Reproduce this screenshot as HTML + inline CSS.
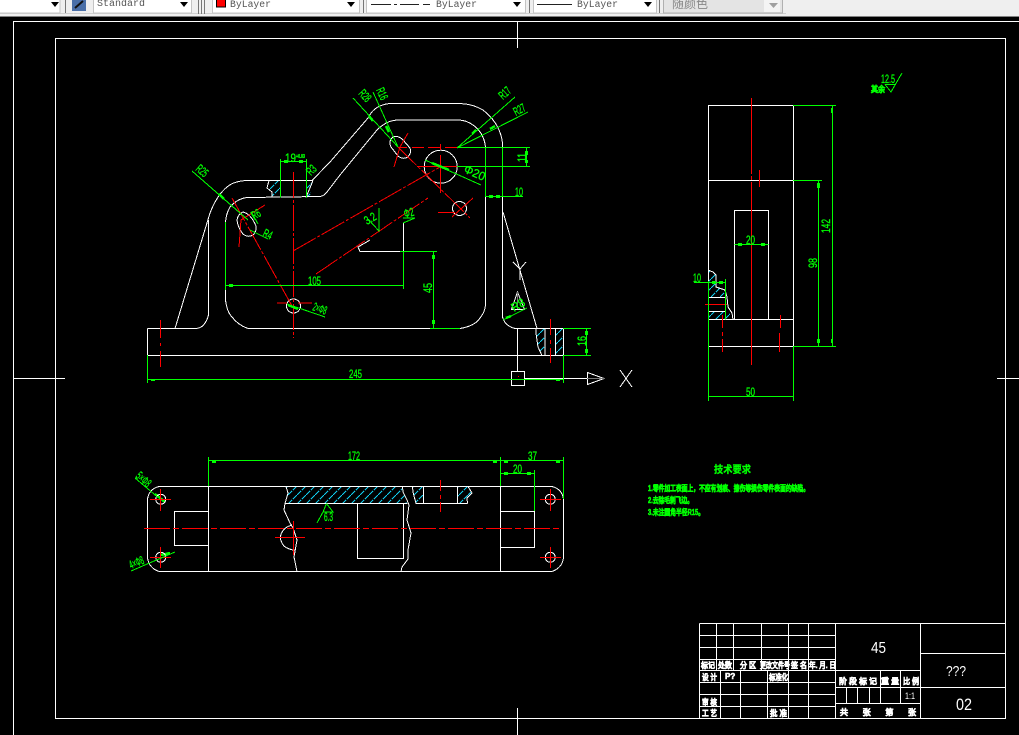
<!DOCTYPE html>
<html><head><meta charset="utf-8"><style>
html,body{margin:0;padding:0;background:#000;width:1019px;height:735px;overflow:hidden}
svg{display:block;position:absolute;left:0;top:0}
.w{stroke:#fff;fill:none}.g{stroke:#0f0;fill:none}.r{stroke:#f00;fill:none}.c{stroke:#1ce;fill:none}
.gt{fill:#0f0;stroke:#0f0;stroke-width:.35;font:12px "Liberation Sans",sans-serif}
.gc{fill:#0f0;stroke:#0f0;stroke-width:.6;font:bold 8px "Liberation Sans","WenQuanYi Zen Hei",sans-serif}
.wt{fill:#fff;stroke:#fff;stroke-width:.6;font:bold 8px "Liberation Sans","WenQuanYi Zen Hei",sans-serif}
.tb{fill:#555;font:10px "Liberation Mono",monospace}
.d{stroke-dasharray:26 2 3 2}
</style></head><body>
<svg width="1019" height="735" viewBox="0 0 1019 735" xmlns="http://www.w3.org/2000/svg">
<defs>
<pattern id="h" width="9" height="9" patternUnits="userSpaceOnUse"><path d="M0 9L9 0" stroke="#1ce" stroke-width="1" stroke-dasharray="6 1" shape-rendering="crispEdges"/></pattern>
</defs>
<rect width="1019" height="735" fill="#000"/>
<!-- toolbar -->
<rect width="1019" height="16" fill="#efefef"/>
<rect y="16" width="1019" height="1" fill="#808080"/>
<rect y="13" width="786" height="1" fill="#d0d0d0"/>
<g fill="#fff" stroke="#c4c4c4"><rect x="-1" y="-1" width="61" height="14"/><rect x="93.500" y="-1" width="98" height="14"/><rect x="212.500" y="-1" width="147" height="14"/><rect x="366.500" y="-1" width="159" height="14"/><rect x="533.500" y="-1" width="123" height="14"/></g>
<rect x="663.500" y="-1" width="119" height="14" fill="#e4e4e4" stroke="#b0b0b0"/>
<rect x="764" y="0" width="16" height="12" fill="#f4f4f4"/>
<g fill="#000"><path d="M51 2h8l-4 5z"/><path d="M180 2h8l-4 5z"/><path d="M347 2h8l-4 5z"/><path d="M513 2h8l-4 5z"/><path d="M644 2h8l-4 5z"/></g>
<path d="M769 3h9l-4.500 5z" fill="#a0a0a0"/>
<g stroke="#777" shape-rendering="crispEdges"><path d="M65.500 0V13M198.500 0V14M201.500 0V14M204.500 0V14M363.500 0V13M529.500 0V13M659.500 0V13"/></g>
<rect x="72" y="0" width="14" height="11" fill="#4a6fa8"/><path d="M75 8L83 1" stroke="#111" stroke-width="2"/>
<rect x="216.500" y="-1" width="9" height="8" fill="#f00" stroke="#000"/>
<text class="tb" x="97" y="6" textLength="48" lengthAdjust="spacingAndGlyphs">Standard</text>
<text class="tb" x="230" y="7" textLength="41" lengthAdjust="spacingAndGlyphs">ByLayer</text>
<text class="tb" x="436" y="7" textLength="41" lengthAdjust="spacingAndGlyphs">ByLayer</text>
<text class="tb" x="577" y="7" textLength="41" lengthAdjust="spacingAndGlyphs">ByLayer</text>
<text x="672" y="8" textLength="36" lengthAdjust="spacingAndGlyphs" style="fill:#888;font:12px 'WenQuanYi Zen Hei','Noto Sans CJK SC',sans-serif">随颜色</text>
<g shape-rendering="crispEdges" stroke="#222"><path d="M371 4.500H391M394 4.500H397M400 4.500H419M423 4.500H430M537 4.500H572"/></g>

<g stroke-width="1" shape-rendering="crispEdges" fill="none">
<!-- frames -->
<path class="w" d="M13.500 735V21.500H1019"/>
<rect class="w" x="55.500" y="38.500" width="950" height="680"/>
<path class="w" d="M517.500 21V48M517.500 708V735M13 378.500H65M997 378.500H1019"/>

<!-- hatches front -->
<path d="M269 180.500L267 188L272 192L272 197.500H281V180.500Z" fill="url(#h)"/>
<path d="M306 180.500L313 180.500L310 197.500H306Z" fill="url(#h)"/>
<path d="M536 328.500L538 347L542 355.500H545V328.500Z" fill="url(#h)"/>
<path d="M555 328.500H563V355.500H555Z" fill="url(#h)"/>
<!-- hatches right view -->
<path d="M708 270L713 272L716 275L716 287L725 290L727 297.500H708Z" fill="url(#h)"/>
<path d="M708 311.500H729L732 319.500H708Z" fill="url(#h)"/>
<!-- hatches bottom -->
<path d="M286 486.500L288 493L285 503.500H407L403 492L402 486.500Z" fill="url(#h)"/>
<path d="M412.500 486.500L413 492L416 503.500H423.500V486.500Z" fill="url(#h)"/>
<path d="M457.500 486.500H468L472 493L467 498L467 503.500H457.500Z" fill="url(#h)"/>

<!-- front view -->
<path class="w" d="M147.500 328.500H196Q205 328 208.500 315V220M147.500 328.500V355.500H563.500V328.500H515Q505 326 502.500 317V143Q500 123 483 110Q473 104 460 103.500H395Q385 103 378 107Q372 110 368 118L330 162L312 180.500H247Q234 181 227 187Q217 195 210 213L175 328.500"/>
<path class="w" d="M248 328.500H460Q475 326 480 318Q485 312 485.500 305V147Q484 133 473 125Q466 120 458 120H398Q387 120 377 130L340 175L327 192Q324 196 320 196.500L248 197.500Q238 198 230 207Q226 214 225.500 222V300Q227 312 232 317Q238 325 248 328.500Z"/>
<path class="w" d="M503 212L537 328.500"/>
<path class="w" d="M370 240L358 247L360 251.500H403.500V223"/>
<path class="w" d="M269 180.500L267 188L272 192V197.500M313 180.500L306 197.500"/>
<path class="w" d="M536 328.500V333L538 347L542 355.500M545 328.500V355.500M555.500 328.500V355.500"/>
<path class="w" d="M243 212Q238 214 237 220Q238 228 243 234Q248 238 253 235Q257 231 256 226Q251 214 243 212Z"/>
<circle class="w" cx="293.500" cy="306" r="7"/>
<circle class="w" cx="440.700" cy="166.700" r="16.500"/>
<circle class="w" cx="459.500" cy="208.500" r="7"/>
<path class="w" d="M393 137Q388 141 391 147L398 156Q403 160 408 157Q412 152 410 148L403 140Q398 135 393 137Z"/>
<!-- UCS -->
<path class="w" d="M517.500 328V371.500M525 378.500H587M520 269L513 262M520 269L526 262M520 269V280"/>
<rect class="w" x="511.500" y="371.500" width="13" height="14"/>
<path class="w" d="M587.500 372.500V384.500L604 378.500ZM620 370L632 387M632 370L620 387M517.500 292L511.500 309.500H524.500Z"/>
<path stroke="#777" d="M587 378.500H605M517.500 292V309"/>
<path stroke="#f00" d="M518 376.500h1"/>

<!-- red front -->
<path class="r d" d="M293.500 172V338"/>
<path class="r d" d="M293 251L440 167"/>
<path class="r d" d="M316 274L428 198"/>
<path class="r d" d="M232 198L292 306"/>
<path class="r" d="M265 205L241 220L239 247M277 303H287M298 303H312M160.500 320V338M160.500 343V346M160.500 351V367M550.500 319V335M550.500 340V344M550.500 348V363"/>
<path class="r" d="M417 166.500H458M440.500 144V150M440.500 155V193M398 147.500H407M412 147.500H424M428 147.500H440M445 147.500H457"/>
<path class="r d" d="M398 147L470 218"/>
<path class="r" d="M408 133L400 147L394 167M438 212.500H455M473 198L452 217"/>

<!-- green front -->
<path class="g" d="M192 171L248 220M250 230L268 239M252 213L258 224"/>
<path class="g" d="M280.500 159V197.500M306.500 159V197.500M280.500 161.500H306.500M225.500 222V290M225.500 285.500H403.500M403.500 251.500V289"/>
<path class="g" d="M353 98L398 147M373 92L398 147M457 148L515 97M457 148L528 112M425 160L481 185"/>
<path class="g" d="M457 147.500H530M457 166.500H530M526.500 147.500V166.500M485.500 147V197M502.500 147V197M485.500 196.500H523"/>
<path class="g" d="M400 251.500H437M433.500 251.500V328.500M430 328.500H460M563 328.500H591M563 355.500H591M586.500 328.500V355.500"/>
<path class="g" d="M147.500 355V383M563.500 355V383M147.500 379.500H563.500"/>
<path class="g" d="M287 304L325 317M503 320L527 308M379 208V231L368 219M403 223L415 218H403"/>
<g fill="#0f0" stroke="none"><rect x="284" y="160" width="4" height="3"/><rect x="299" y="160" width="4" height="3"/><rect x="229" y="284" width="4" height="3"/><rect x="432" y="255" width="3" height="4"/><rect x="432" y="320" width="3" height="4"/><rect x="525" y="151" width="3" height="4"/><rect x="525" y="160" width="3" height="3"/><rect x="489" y="195" width="4" height="3"/><rect x="496" y="195" width="4" height="3"/><rect x="585" y="331" width="3" height="4"/><rect x="585" y="349" width="3" height="4"/><rect x="151" y="379" width="4" height="2"/><rect x="556" y="379" width="4" height="2"/></g>
<g stroke="#0f0" stroke-width="2.500"><path d="M219 194L224 199M369 116L373 121M386 126L389 132M472 134L476 130M490 129L495 126M432 163L449 170M288 305L298 309M506 318L511 316M165 502L155 494M161 555L170 553"/></g>

<!-- right view -->
<path class="w" d="M708.500 270V105.500H793.500V346.500H708.500V270M708.500 180.500H793.500M734.500 319.500V210.500H768.500V319.500M708.500 319.500H793.500"/>
<path class="w" d="M708 270L713 272L716 275V287L725 290L727 297L728 307L732 313L733 319.500M708.500 297.500H726M708.500 311.500H726"/>
<path class="r" d="M751.500 98V174M751.500 176V180M751.500 182V365M759.500 170V187M705 304.500H727M722.500 315V328M722.500 332V336M722.500 339V352M780.500 315V328M779.500 333V352"/>
<path class="g" d="M793 105.500H836M832.500 105.500V346.500M793 180.500H822M818.500 180.500V346.500M793 346.500H836M734.500 244.500H768.500M694 282.500H725.500M725.500 279V319.500M708.500 281V401M793.500 346.500V401M708.500 396.500H793.500"/>
<g fill="#0f0" stroke="none"><rect x="738" y="243" width="4" height="3"/><rect x="761" y="243" width="4" height="3"/><rect x="712" y="281" width="4" height="3"/><rect x="719" y="281" width="4" height="3"/><rect x="817" y="183" width="3" height="5"/><rect x="817" y="339" width="3" height="4"/><rect x="831" y="108" width="2" height="5"/><rect x="831" y="339" width="2" height="4"/></g>
<path class="g" d="M885 84.500H896M885 84.500L891 92L902 73"/>

<!-- bottom view -->
<path class="w" d="M159 486.500H552Q562 489 563.500 499V558Q562 568 552 571.500H159Q149 568 147.500 558V499Q149 489 159 486.500Z"/>
<path class="w" d="M208.500 486.500V571.500M500.500 486.500V571.500M208.500 511.500H174.500V545.500H208.500M500.500 511.500H534.500V547.500H500.500"/>
<path class="w" d="M286 486.500L288 493L285 503.500L284 510L290 523L293 528L297 540L294 557L297 571.500M402.500 486.500L403 492L407 500L409 505L407 520L411 533L408 550L408 559L402 567L401 571.500"/>
<path class="w" d="M285 503.500H407.500M357.500 503.500V558.500H403.500V503.500M412.500 486.500L413 492L416 503.500H467.500M423.500 486.500V503.500M457.500 486.500V503.500M468 486.500L472 493L467 498L467.500 503.500"/>
<path class="w" d="M292 525Q284 527 281 534Q279 540 284 546Q289 550 295 550"/>
<circle class="w" cx="160.700" cy="499.300" r="5"/><circle class="w" cx="160.700" cy="557.300" r="5"/><circle class="w" cx="550.300" cy="499.300" r="5"/><circle class="w" cx="550.300" cy="557.300" r="5"/>
<path class="r" stroke-dasharray="26 3 6 3" d="M144 528.500H562"/>
<path class="r" d="M150 499.500H171M160.500 489V511M150 557.500H171M160.500 547V568M540 499.500H561M550.500 489V511M540 557.500H561M550.500 547V568M293.500 521V555M275 537.500H305M440.500 480V491M440.500 495V499M440.500 502V512"/>
<path class="g" d="M208.500 457V486M500.500 457V486M563.500 457V499M208.500 460.500H563.500M500.500 473.500H534.500M534.500 470V511M135 478L160 499M131 571L175 552M326.500 503.500L323 512H333L326.500 503.500M323 512L317 523"/>
<g fill="#0f0" stroke="none"><rect x="212" y="461" width="4" height="2"/><rect x="493" y="461" width="4" height="2"/><rect x="504" y="461" width="4" height="2"/><rect x="556" y="461" width="4" height="2"/><rect x="504" y="472" width="4" height="3"/><rect x="527" y="472" width="4" height="3"/></g>

<!-- title block -->
<path class="w" d="M699.500 623.500H1005.500M699.500 623.500V718.500M835.500 623.500V718.500M920.500 623.500V718.500M699.500 635.500H835.500M699.500 647.500H835.500M699.500 659.500H835.500M699.500 670.500H920.500M699.500 682.500H835.500M699.500 694.500H835.500M699.500 706.500H835.500M835.500 687.500H1005.500M920.500 653.500H1005.500M835.500 703.500H920.500"/>
<path class="w" d="M716.500 623.500V670.500M733.500 623.500V670.500M761.500 623.500V670.500M788.500 623.500V718.500M808.500 623.500V718.500M720.500 670.500V718.500M740.500 670.500V718.500M767.500 670.500V718.500M880.500 670.500V703.500M900.500 670.500V703.500M846.500 687.500V703.500M857.500 687.500V703.500M869.500 687.500V703.500"/>
</g>

<!-- dimension text -->
<g class="gt">
<text x="285" y="162" textLength="11" lengthAdjust="spacingAndGlyphs">19</text>
<text x="296" y="158" textLength="9" lengthAdjust="spacingAndGlyphs" style="font-size:5px;font-weight:bold">+0.03</text>
<text x="308" y="285" textLength="13" lengthAdjust="spacingAndGlyphs">105</text>
<text x="349" y="378" textLength="13" lengthAdjust="spacingAndGlyphs">245</text>
<text x="515" y="196" textLength="8" lengthAdjust="spacingAndGlyphs">10</text>
<text x="693" y="282" textLength="8" lengthAdjust="spacingAndGlyphs">10</text>
<text x="746" y="244" textLength="9" lengthAdjust="spacingAndGlyphs">20</text>
<text x="746" y="396" textLength="9" lengthAdjust="spacingAndGlyphs">50</text>
<text x="348" y="460" textLength="12" lengthAdjust="spacingAndGlyphs">172</text>
<text x="528" y="460" textLength="9" lengthAdjust="spacingAndGlyphs">37</text>
<text x="513" y="473" textLength="9" lengthAdjust="spacingAndGlyphs">20</text>
<text x="324" y="521" textLength="9" lengthAdjust="spacingAndGlyphs">6.3</text>
<text x="881" y="83" textLength="14" lengthAdjust="spacingAndGlyphs">12.5</text>
<text transform="translate(432,293) rotate(-90)" textLength="10" lengthAdjust="spacingAndGlyphs">45</text>
<text transform="translate(586,346) rotate(-90)" textLength="10" lengthAdjust="spacingAndGlyphs">16</text>
<text transform="translate(526,162) rotate(-90)" textLength="9" lengthAdjust="spacingAndGlyphs">11</text>
<text transform="translate(817,268) rotate(-90)" textLength="10" lengthAdjust="spacingAndGlyphs">98</text>
<text transform="translate(830,233) rotate(-90)" textLength="14" lengthAdjust="spacingAndGlyphs">142</text>
<text transform="translate(195,170) rotate(40)" textLength="12" lengthAdjust="spacingAndGlyphs">R25</text>
<text transform="translate(358,94) rotate(47)" textLength="12" lengthAdjust="spacingAndGlyphs">R28</text>
<text transform="translate(376,90) rotate(65)" textLength="12" lengthAdjust="spacingAndGlyphs">R16</text>
<text transform="translate(503,100) rotate(-42)" textLength="12" lengthAdjust="spacingAndGlyphs">R17</text>
<text transform="translate(516,116) rotate(-28)" textLength="12" lengthAdjust="spacingAndGlyphs">R27</text>
<text transform="translate(311,176) rotate(-45)" textLength="9" lengthAdjust="spacingAndGlyphs">R3</text>
<text transform="translate(262,236) rotate(25)" textLength="9" lengthAdjust="spacingAndGlyphs">R4</text>
<text transform="translate(254,220) rotate(-30)" textLength="9" lengthAdjust="spacingAndGlyphs">R6</text>
<text transform="translate(463,172) rotate(24)" textLength="22" lengthAdjust="spacingAndGlyphs">Φ20</text>
<text transform="translate(312,310) rotate(20)" textLength="14" lengthAdjust="spacingAndGlyphs">2×Φ8</text>
<text transform="translate(514,312) rotate(-30)" textLength="14" lengthAdjust="spacingAndGlyphs">R8</text>
<text transform="translate(367,225) rotate(-30)" textLength="12" lengthAdjust="spacingAndGlyphs">3.2</text>
<text transform="translate(405,218) rotate(-15)" textLength="10" lengthAdjust="spacingAndGlyphs">Φ2</text>
<text transform="translate(135,477) rotate(42)" textLength="16" lengthAdjust="spacingAndGlyphs">5×Φ8</text>
<text transform="translate(131,569) rotate(-22)" textLength="15" lengthAdjust="spacingAndGlyphs">4×Φ8</text>
</g>
<text class="gc" x="871" y="92" textLength="14" lengthAdjust="spacingAndGlyphs">其余</text>

<!-- tech -->
<text x="714" y="473" textLength="37" lengthAdjust="spacingAndGlyphs" style="fill:#0f0;stroke:#0f0;stroke-width:.3;font:bold 10px 'WenQuanYi Zen Hei','Noto Sans CJK SC',sans-serif">技术要求</text>
<text class="gc" x="648" y="491" textLength="161" lengthAdjust="spacingAndGlyphs">1.零件加工表面上，不应有划痕、擦伤等损伤零件表面的缺陷。</text>
<text class="gc" x="648" y="503" textLength="45" lengthAdjust="spacingAndGlyphs">2.去除毛刺飞边。</text>
<text class="gc" x="648" y="515" textLength="56" lengthAdjust="spacingAndGlyphs">3.未注圆角半径R15。</text>

<!-- title text -->
<g class="wt">
<text x="701" y="668" textLength="14" lengthAdjust="spacingAndGlyphs">标记</text>
<text x="718" y="668" textLength="14" lengthAdjust="spacingAndGlyphs">处数</text>
<text x="740" y="668" textLength="16" lengthAdjust="spacingAndGlyphs">分 区</text>
<text x="760" y="668" textLength="30" lengthAdjust="spacingAndGlyphs">更改文件号</text>
<text x="791" y="668" textLength="16" lengthAdjust="spacingAndGlyphs">签 名</text>
<text x="809" y="668" textLength="27" lengthAdjust="spacingAndGlyphs">年. 月. 日</text>
<text x="702" y="680" textLength="15" lengthAdjust="spacingAndGlyphs">设 计</text>
<text x="725" y="679">P?</text>
<text x="769" y="680" textLength="19" lengthAdjust="spacingAndGlyphs">标准化</text>
<text x="702" y="705" textLength="15" lengthAdjust="spacingAndGlyphs">审 核</text>
<text x="702" y="716" textLength="15" lengthAdjust="spacingAndGlyphs">工 艺</text>
<text x="770" y="716" textLength="17" lengthAdjust="spacingAndGlyphs">批 准</text>
<text x="839" y="684" textLength="38" lengthAdjust="spacingAndGlyphs">阶 段 标 记</text>
<text x="881" y="684" textLength="18" lengthAdjust="spacingAndGlyphs">重 量</text>
<text x="903" y="684" textLength="16" lengthAdjust="spacingAndGlyphs">比 例</text>
<text x="840" y="715" textLength="76" lengthAdjust="spacing">共 张 第 张</text>
</g>
<g fill="#fff" font-family="Liberation Sans,sans-serif">
<text x="871" y="653" font-size="16" textLength="15" lengthAdjust="spacingAndGlyphs">45</text>
<text x="946" y="676" font-size="15" textLength="20" lengthAdjust="spacingAndGlyphs">???</text>
<text x="956" y="710" font-size="17" textLength="16" lengthAdjust="spacingAndGlyphs">02</text>
<text x="905" y="699" font-size="9" textLength="10" lengthAdjust="spacingAndGlyphs">1:1</text>
</g>
</svg>
</body></html>
